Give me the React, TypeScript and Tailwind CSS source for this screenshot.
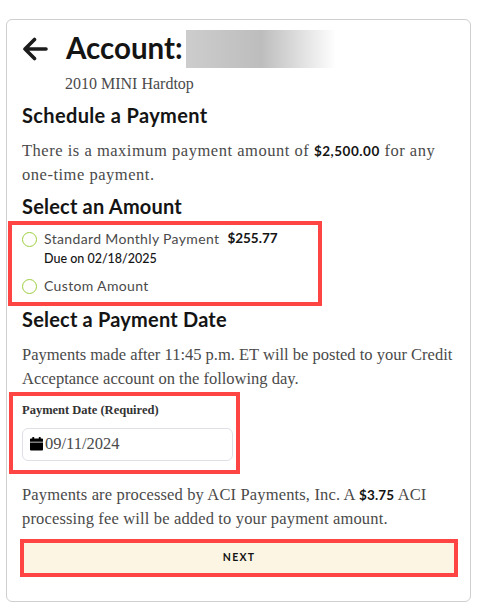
import React from 'react';

const slab = "font-['Liberation_Serif',serif]";
const geo = "font-['Lato',sans-serif]";

function Radio() {
  return <span className="w-[15px] h-[15px] rounded-full border border-[#9ccf3f] bg-white shrink-0 mt-[2px]" />;
}

function Calendar() {
  return (
    <svg viewBox="0 0 14 15" className="w-[13px] h-[14px] shrink-0 -mt-[2px]" fill="#000">
      <rect x="2.5" y="0" width="2" height="3" />
      <rect x="9.5" y="0" width="2" height="3" />
      <path d="M1 1.5h12a1 1 0 0 1 1 1V5H0V2.5a1 1 0 0 1 1-1Z" />
      <path d="M0 6h14v7.5a1 1 0 0 1-1 1H1a1 1 0 0 1-1-1Z" />
    </svg>
  );
}

export default function App() {
  return (
    <div className="w-[479px] h-[613px] bg-white pt-[19px] pl-[6px] overflow-hidden">
      <div className="w-[465px] h-[583px] border border-[#cfcfcf] rounded-[6px] px-[15px] text-[#4a4a4a]">
        <div className="flex items-center h-[38px] mt-[10px]">
          <svg viewBox="0 0 26 24" className="w-[26px] h-[24px] shrink-0" fill="none" stroke="#1c1c1c" strokeWidth="3.6" strokeLinecap="round" strokeLinejoin="round">
            <path d="M24 12H3M12.5 2.5 3 12l9.5 9.5" />
          </svg>
          <h1 className={`${geo} ml-[18px] -mt-[3px] text-[29.5px] font-bold text-[#141414] leading-none whitespace-nowrap`}>Account:</h1>
          <div className="ml-[3px] w-[150px] h-[38px] bg-gradient-to-r from-[#cdcdcd] via-[#bdbdbd] via-50% to-white" />
        </div>
        <p className={`${slab} ml-[43px] mt-[6px] text-[16px] leading-[20px] text-[#4a4a4a]`}>2010 MINI Hardtop</p>
        <h2 className={`${geo} mt-[10px] text-[20px] font-bold tracking-[0.35px] leading-[22px] text-[#141414]`}>Schedule a Payment</h2>
        <p className={`${slab} mt-[13px] text-[16.5px] tracking-[0.52px] leading-[24px] whitespace-nowrap`}>
          There is a maximum payment amount of <b className={`${geo} text-[13.5px] text-[#141414]`}>$2,500.00</b> for any<br />one-time payment.
        </p>
        <h2 className={`${geo} mt-[8px] text-[20px] font-bold tracking-[0.2px] leading-[22px] text-[#141414]`}>Select an Amount</h2>
        <div className="w-[314px] h-[85px] -ml-[14px] mt-[4px] border-4 border-[#ff4444] pl-[10px] pt-[5px]">
          <div className={`${geo} flex items-center gap-[7px] h-[16px] text-[14px]`}>
            <Radio />
            <span className="tracking-[0.35px] text-[#4a4a4a] whitespace-nowrap mr-[1px]">Standard Monthly Payment</span>
            <b className="text-[13.5px] text-[#141414]">$255.77</b>
          </div>
          <p className={`${geo} ml-[22px] mt-[5px] text-[12.5px] leading-[16px] text-[#141414] font-medium`}>Due on 02/18/2025</p>
          <div className={`${geo} flex items-center gap-[7px] h-[16px] mt-[10px] text-[14px]`}>
            <Radio />
            <span className="tracking-[0.35px] text-[#4a4a4a]">Custom Amount</span>
          </div>
        </div>
        <h2 className={`${geo} mt-[2px] text-[20px] font-bold tracking-[0.2px] leading-[22px] text-[#141414]`}>Select a Payment Date</h2>
        <p className={`${slab} mt-[13px] text-[16.5px] leading-[24px] whitespace-nowrap`}>
          Payments made after 11:45 p.m. ET will be posted to your Credit<br />Acceptance account on the following day.
        </p>
        <div className="w-[231px] h-[82px] -ml-[13px] mt-[1px] border-4 border-[#ff4444] pl-[9px] pt-[7px]">
          <label className={`${slab} block text-[12.5px] leading-[14px] font-bold text-[#333]`}>Payment Date (Required)</label>
          <div className="mt-[11px] w-[211px] h-[33px] border border-[#dfdfe8] rounded-[6px] flex items-center pl-[7px] gap-[2px]">
            <Calendar />
            <span className={`${slab} text-[16.5px] text-[#4a4a4a]`}>09/11/2024</span>
          </div>
        </div>
        <p className={`${slab} mt-[9px] text-[16.5px] tracking-[0.15px] leading-[24px] whitespace-nowrap`}>
          Payments are processed by ACI Payments, Inc. A <b className={`${geo} text-[13.5px] text-[#141414]`}>$3.75</b> ACI<br />processing fee will be added to your payment amount.
        </p>
        <button className={`${geo} -ml-[2px] mt-[8px] block w-[438px] h-[38px] border-4 border-[#ff4444] bg-[#fdf5e4] text-[10.5px] font-bold tracking-[1.2px] text-[#141414]`}>NEXT</button>
      </div>
    </div>
  );
}
